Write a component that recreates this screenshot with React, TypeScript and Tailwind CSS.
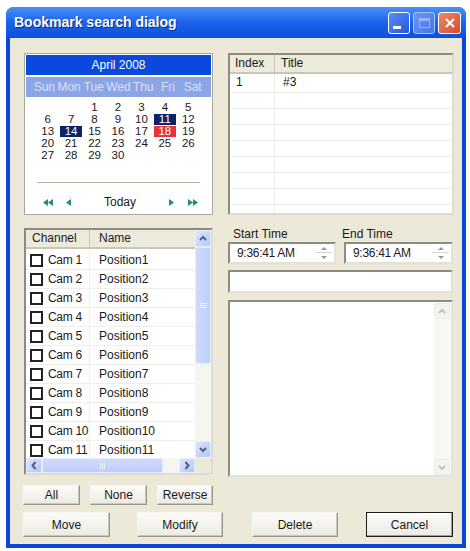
import React from "react";

const weeks: (number | null)[][] = [
  [null, null, 1, 2, 3, 4, 5],
  [6, 7, 8, 9, 10, 11, 12],
  [13, 14, 15, 16, 17, 18, 19],
  [20, 21, 22, 23, 24, 25, 26],
  [27, 28, 29, 30, null, null, null],
];

const marked: Record<number, string> = {
  11: "bg-[#0a246a] text-white",
  14: "bg-[#0a246a] text-white",
  18: "bg-[#e8323c] text-white",
};

const channels = Array.from({ length: 11 }, (_, i) => ({
  cam: `Cam ${i + 1}`,
  name: `Position${i + 1}`,
}));

function Tri({ left, double }: { left?: boolean; double?: boolean }) {
  const one = left ? "M5 0 L0 3.5 L5 7 Z" : "M0 0 L5 3.5 L0 7 Z";
  return (
    <svg width={double ? 10 : 5} height="7" viewBox={double ? "0 0 10 7" : "0 0 5 7"}>
      <path d={one} fill="#1f8c8c" />
      {double && <path d={one} transform="translate(5 0)" fill="#1f8c8c" />}
    </svg>
  );
}

function Chevron({ dir, faded }: { dir: "up" | "down" | "left" | "right"; faded?: boolean }) {
  const d = {
    up: "M2 7 L5 4 L8 7",
    down: "M2 4 L5 7 L8 4",
    left: "M6.5 2 L3.5 5.5 L6.5 9",
    right: "M3.5 2 L6.5 5.5 L3.5 9",
  }[dir];
  return (
    <svg width="10" height="11" viewBox="0 0 10 11">
      <path d={d} fill="none" stroke={faded ? "#c4c3bc" : "#4d6185"} strokeWidth="2" />
    </svg>
  );
}

function ArrowBtn({ dir, className = "" }: { dir: "up" | "down" | "left" | "right"; className?: string }) {
  return (
    <div
      className={`flex items-center justify-center rounded-[2px] border border-[#e6edfd] bg-gradient-to-br from-[#dbe5fd] to-[#b4c8f8] ${className}`}
    >
      <Chevron dir={dir} />
    </div>
  );
}

function Calendar() {
  return (
    <div className="w-[189px] h-[162px] border border-[#a9a79c] p-[1px] bg-white flex flex-col">
      <div className="h-[20px] bg-[#0b48dd] text-white text-[12px] leading-[20px] text-center">April 2008</div>
      <div className="h-[20px] mt-[2px] bg-[#8ca5e6] text-[#d8e2f9] text-[12px] leading-[20px] grid grid-cols-7 px-[6px]">
        {["Sun", "Mon", "Tue", "Wed", "Thu", "Fri", "Sat"].map((d) => (
          <span key={d} className="text-center">
            {d}
          </span>
        ))}
      </div>
      <div className="mt-[5px] ml-[10px] w-[164px]">
        {weeks.map((w, i) => (
          <div key={i} className="grid grid-cols-7 h-[12px]">
            {w.map((d, j) => (
              <div key={j} className="flex justify-center">
                {d !== null && (
                  <div
                    className={`w-[22px] h-[11px] text-center text-[11.5px] leading-[11px] ${marked[d] ?? "text-[#1a1a1a]"}`}
                  >
                    {d}
                  </div>
                )}
              </div>
            ))}
          </div>
        ))}
      </div>
      <div className="mt-[20px] mx-[11px] h-[2px] border-t border-[#b4b3aa] border-b border-b-white" />
      <div className="mt-[9px] flex items-center text-[12px] text-[#1a1a1a]">
        <div className="ml-[17px] w-[10px] flex">
          <Tri left double />
        </div>
        <div className="ml-[13px]">
          <Tri left />
        </div>
        <span className="ml-[33px]">Today</span>
        <div className="ml-[33px]">
          <Tri />
        </div>
        <div className="ml-[14px]">
          <Tri double />
        </div>
      </div>
    </div>
  );
}

function BookmarkList() {
  return (
    <div className="w-[226px] h-[162px] border-2 border-t-[#8c8b84] border-l-[#8c8b84] border-r-[#dedcd2] border-b-[#dedcd2] bg-white flex flex-col text-[12px] text-[#1a1a1a] overflow-hidden">
      <div className="h-[19px] shrink-0 flex bg-[#ebeadb] border-b-2 border-[#c9c6b6]">
        <div className="w-[45px] pl-[5px] leading-[17px] border-r border-[#c9c6b6]">Index</div>
        <div className="pl-[6px] leading-[17px]">Title</div>
      </div>
      <div className="flex-1">
        {Array.from({ length: 9 }).map((_, i) => (
          <div
            key={i}
            className={`flex border-b border-[#ecebe5] ${i === 0 ? "h-[19px]" : "h-[16px]"}`}
          >
            <div className="w-[45px] pl-[6px] leading-[17px] border-r border-[#ecebe5]">{i === 0 ? "1" : ""}</div>
            <div className="pl-[8px] leading-[17px]">{i === 0 ? "#3" : ""}</div>
          </div>
        ))}
      </div>
    </div>
  );
}

function ChannelList() {
  return (
    <div className="w-[189px] h-[247px] border-2 border-t-[#8c8b84] border-l-[#8c8b84] border-r-[#dedcd2] border-b-[#dedcd2] bg-white flex flex-col text-[12px] text-[#1a1a1a]">
      <div className="flex h-[228px]">
        <div className="w-[169px] flex flex-col overflow-hidden">
          <div className="h-[19px] shrink-0 flex bg-[#ebeadb] border-b-2 border-[#c9c6b6]">
            <div className="w-[64px] pl-[6px] leading-[17px] border-r border-[#c9c6b6]">Channel</div>
            <div className="pl-[9px] leading-[17px]">Name</div>
          </div>
          <div className="pt-[2px]">
            {channels.map((c) => (
              <div key={c.cam} className="h-[19px] flex items-center border-b border-[#efeee8] whitespace-nowrap">
                <div className="w-[64px] shrink-0 flex items-center border-r border-[#efeee8] h-full">
                  <div className="ml-[4px] shrink-0 w-[13px] h-[13px] border-2 border-[#222] bg-white" />
                  <span className="ml-[5px] tracking-[-0.3px]">{c.cam}</span>
                </div>
                <span className="pl-[9px]">{c.name}</span>
              </div>
            ))}
          </div>
        </div>
        <div className="w-[16px] flex flex-col bg-[#f6f5f0]">
          <ArrowBtn dir="up" className="h-[17px]" />
          <div className="h-[117px] rounded-[2px] border border-[#e6edfd] bg-gradient-to-r from-[#cfdbfc] to-[#bccef9] flex items-center justify-center">
            <div className="flex flex-col gap-[1px]">
              <div className="w-[7px] h-[1px] bg-[#eef3fe]" />
              <div className="w-[7px] h-[1px] bg-[#eef3fe]" />
              <div className="w-[7px] h-[1px] bg-[#eef3fe]" />
            </div>
          </div>
          <div className="flex-1" />
          <ArrowBtn dir="down" className="h-[17px]" />
        </div>
      </div>
      <div className="flex h-[15px]">
        <div className="w-[169px] flex bg-[#f6f5f0]">
          <ArrowBtn dir="left" className="w-[16px]" />
          <div className="w-[121px] rounded-[2px] border border-[#e6edfd] bg-gradient-to-b from-[#cfdbfc] to-[#bccef9] flex items-center justify-center">
            <div className="flex gap-[1px]">
              <div className="w-[1px] h-[6px] bg-[#eef3fe]" />
              <div className="w-[1px] h-[6px] bg-[#eef3fe]" />
              <div className="w-[1px] h-[6px] bg-[#eef3fe]" />
            </div>
          </div>
          <div className="flex-1" />
          <ArrowBtn dir="right" className="w-[16px]" />
        </div>
        <div className="w-[16px] bg-[#ece9d8]" />
      </div>
    </div>
  );
}

function Spinner() {
  return (
    <div className="ml-auto mr-[2px] w-[17px] h-[16px] flex flex-col gap-[1px]">
      <div className="flex-1 flex items-center justify-center border-b border-[#d8d6cc]">
        <div className="w-0 h-0 border-l-[3px] border-r-[3px] border-b-[3px] border-l-transparent border-r-transparent border-b-[#9a998f]" />
      </div>
      <div className="flex-1 flex items-center justify-center">
        <div className="w-0 h-0 border-l-[3px] border-r-[3px] border-t-[3px] border-l-transparent border-r-transparent border-t-[#9a998f]" />
      </div>
    </div>
  );
}

function TimeBox({ className = "" }: { className?: string }) {
  return (
    <div
      className={`h-[22px] border-2 border-t-[#8c8b84] border-l-[#8c8b84] border-r-[#e4e2d8] border-b-[#e4e2d8] bg-white flex items-center ${className}`}
    >
      <span className="ml-[7px] text-[12px] text-[#1a1a1a] tracking-[-0.3px]">9:36:41 AM</span>
      <Spinner />
    </div>
  );
}

function RightPanel() {
  return (
    <div className="w-[226px] flex flex-col text-[12px] text-[#1a1a1a]">
      <div className="h-[14px] flex leading-[12px]">
        <span className="ml-[5px] w-[109px]">Start Time</span>
        <span>End Time</span>
      </div>
      <div className="flex">
        <TimeBox className="w-[108px]" />
        <TimeBox className="ml-[8px] w-[109px]" />
      </div>
      <div className="mt-[6px] h-[23px] w-[225px] border-2 border-t-[#8c8b84] border-l-[#8c8b84] border-r-[#e4e2d8] border-b-[#e4e2d8] bg-white" />
      <div className="mt-[7px] h-[177px] w-[225px] border-2 border-t-[#8c8b84] border-l-[#8c8b84] border-r-[#e4e2d8] border-b-[#e4e2d8] bg-white flex">
        <div className="flex-1" />
        <div className="w-[16px] mr-[1px] mt-[1px] flex flex-col bg-[#f7f7f4]">
          <div className="h-[16px] flex items-center justify-center rounded-[2px] border border-[#ecebe6] bg-[#f4f3ef]">
            <Chevron dir="up" faded />
          </div>
          <div className="flex-1" />
          <div className="h-[16px] flex items-center justify-center rounded-[2px] border border-[#ecebe6] bg-[#f4f3ef]">
            <Chevron dir="down" faded />
          </div>
        </div>
      </div>
    </div>
  );
}

function Btn({ children, className = "", def }: { children: React.ReactNode; className?: string; def?: boolean }) {
  return (
    <div
      className={`flex items-center justify-center text-[12px] text-[#1a1a1a] bg-gradient-to-b from-[#fbfbf8] to-[#eceae2] ${
        def
          ? "border border-[#1c1c1c] shadow-[inset_-1px_-1px_0_#9d9c95]"
          : "border border-t-[#f7f6f2] border-l-[#f7f6f2] border-b-[#98978f] border-r-[#98978f] shadow-[inset_-1px_-1px_0_#c9c8c0]"
      } ${className}`}
    >
      {children}
    </div>
  );
}

export default function App() {
  return (
    <div className="w-[470px] h-[551px] bg-white pt-[7px] pl-[6px] font-['Liberation_Sans',Arial,sans-serif]">
      <div className="w-[460px] h-[541px] rounded-t-[8px] bg-[#0a47d6] flex flex-col">
        <div className="h-[31px] shrink-0 rounded-t-[8px] bg-gradient-to-b from-[#4a90f7] via-[#1c62ea] to-[#0c50dc] flex items-center pl-[8px] pr-[5px]">
          <span className="text-white font-bold text-[14px] [text-shadow:1px_1px_0_#0a2a8a]">Bookmark search dialog</span>
          <div className="ml-auto flex items-center gap-[3px]">
            <div className="w-[22px] h-[22px] rounded-[3px] border border-white bg-gradient-to-br from-[#5a8cf5] to-[#2456e0] relative">
              <div className="absolute left-[4px] bottom-[4px] w-[8px] h-[3px] bg-white" />
            </div>
            <div className="w-[22px] h-[22px] rounded-[3px] border border-[#a9c3f7] bg-gradient-to-br from-[#6d98f2] to-[#4775e6] flex items-center justify-center">
              <div className="w-[11px] h-[10px] border border-[#98b5f3] border-t-[3px]" />
            </div>
            <div className="w-[23px] h-[22px] rounded-[3px] border border-white bg-gradient-to-br from-[#ec8a6a] to-[#d44a26] flex items-center justify-center">
              <svg width="12" height="12" viewBox="0 0 12 12">
                <path d="M2 2 L10 10 M10 2 L2 10" stroke="white" strokeWidth="2.2" />
              </svg>
            </div>
          </div>
        </div>
        <div className="mx-[4px] mb-[4px] flex-1 bg-[#ece9d8] pl-[14px] pt-[15px] flex flex-col">
          <div className="flex gap-[15px]">
            <Calendar />
            <BookmarkList />
          </div>
          <div className="flex gap-[15px] mt-[13px]">
            <ChannelList />
            <RightPanel />
          </div>
          <div className="flex mt-[8px] h-[20px]">
            <Btn className="w-[57px] -ml-[1px]">All</Btn>
            <Btn className="w-[57px] ml-[10px]">None</Btn>
            <Btn className="w-[56px] ml-[10px]">Reverse</Btn>
          </div>
          <div className="flex mt-[7px] h-[25px]">
            <Btn className="w-[87px] -ml-[1px]">Move</Btn>
            <Btn className="w-[86px] ml-[27px]">Modify</Btn>
            <Btn className="w-[86px] ml-[29px]">Delete</Btn>
            <Btn className="w-[87px] ml-[28px]" def>
              Cancel
            </Btn>
          </div>
        </div>
      </div>
    </div>
  );
}
